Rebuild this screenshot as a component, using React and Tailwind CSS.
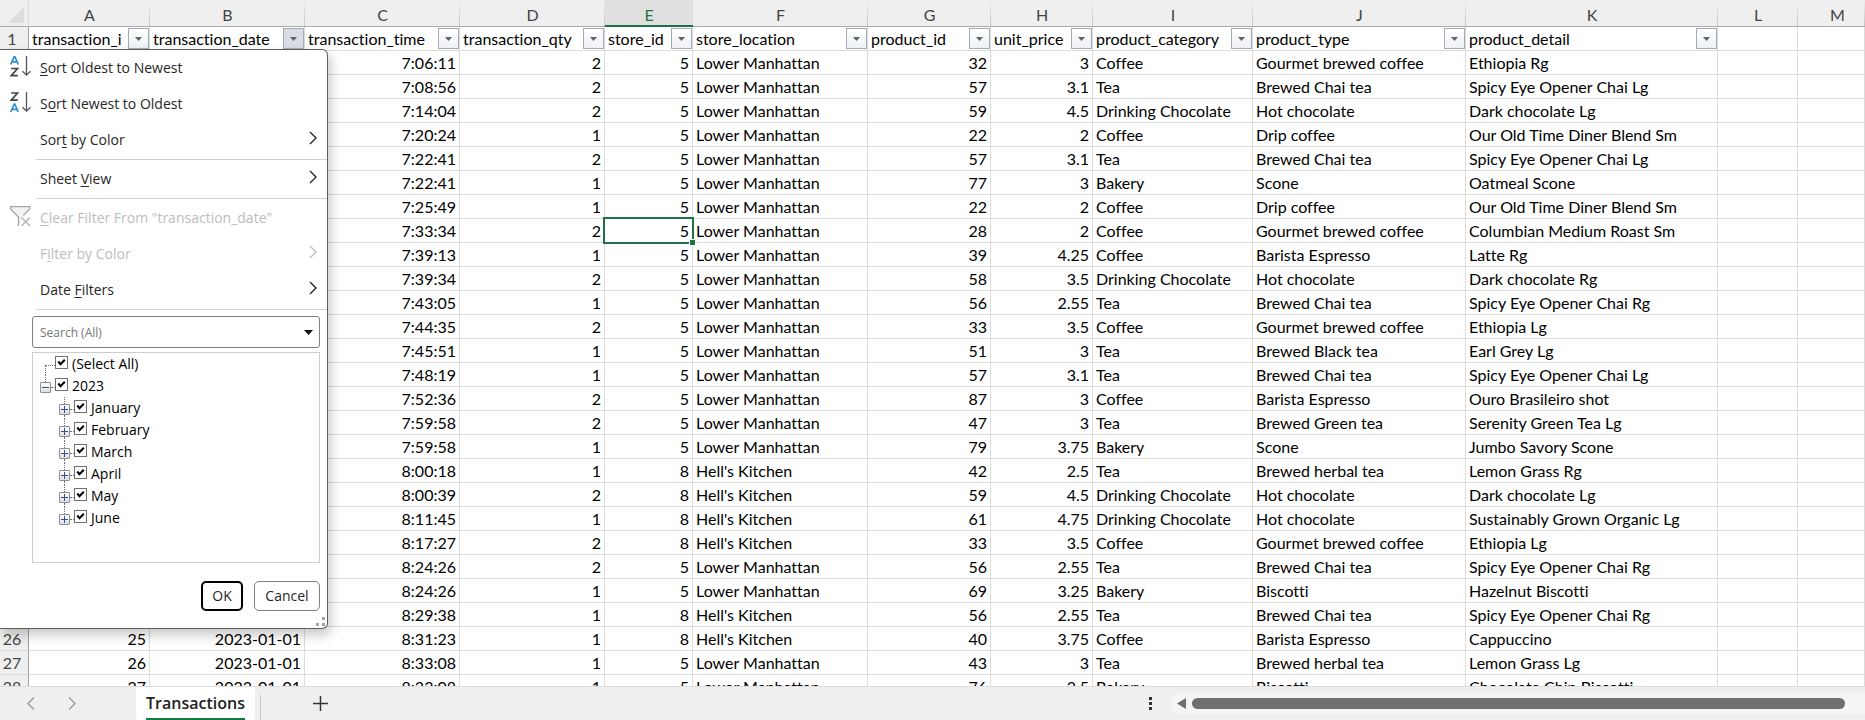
import React from "react";

const COLUMNS = [
  { letter: "A", name: "transaction_i", width: "w-[121px]", right: true },
  { letter: "B", name: "transaction_date", width: "w-[155px]", right: true, open: true },
  { letter: "C", name: "transaction_time", width: "w-[155px]", right: true },
  { letter: "D", name: "transaction_qty", width: "w-[145px]", right: true },
  { letter: "E", name: "store_id", width: "w-[88px]", right: true },
  { letter: "F", name: "store_location", width: "w-[175px]" },
  { letter: "G", name: "product_id", width: "w-[123px]", right: true },
  { letter: "H", name: "unit_price", width: "w-[102px]", right: true },
  { letter: "I", name: "product_category", width: "w-[160px]" },
  { letter: "J", name: "product_type", width: "w-[213px]" },
  { letter: "K", name: "product_detail", width: "w-[252px]" },
  { letter: "L", name: "", width: "w-[80px]" },
  { letter: "M", name: "", width: "" },
];

const LM = "Lower Manhattan";
const HK = "Hell's Kitchen";

const RECORDS = [
  ["7:06:11", "2", "5", LM, "32", "3", "Coffee", "Gourmet brewed coffee", "Ethiopia Rg"],
  ["7:08:56", "2", "5", LM, "57", "3.1", "Tea", "Brewed Chai tea", "Spicy Eye Opener Chai Lg"],
  ["7:14:04", "2", "5", LM, "59", "4.5", "Drinking Chocolate", "Hot chocolate", "Dark chocolate Lg"],
  ["7:20:24", "1", "5", LM, "22", "2", "Coffee", "Drip coffee", "Our Old Time Diner Blend Sm"],
  ["7:22:41", "2", "5", LM, "57", "3.1", "Tea", "Brewed Chai tea", "Spicy Eye Opener Chai Lg"],
  ["7:22:41", "1", "5", LM, "77", "3", "Bakery", "Scone", "Oatmeal Scone"],
  ["7:25:49", "1", "5", LM, "22", "2", "Coffee", "Drip coffee", "Our Old Time Diner Blend Sm"],
  ["7:33:34", "2", "5", LM, "28", "2", "Coffee", "Gourmet brewed coffee", "Columbian Medium Roast Sm"],
  ["7:39:13", "1", "5", LM, "39", "4.25", "Coffee", "Barista Espresso", "Latte Rg"],
  ["7:39:34", "2", "5", LM, "58", "3.5", "Drinking Chocolate", "Hot chocolate", "Dark chocolate Rg"],
  ["7:43:05", "1", "5", LM, "56", "2.55", "Tea", "Brewed Chai tea", "Spicy Eye Opener Chai Rg"],
  ["7:44:35", "2", "5", LM, "33", "3.5", "Coffee", "Gourmet brewed coffee", "Ethiopia Lg"],
  ["7:45:51", "1", "5", LM, "51", "3", "Tea", "Brewed Black tea", "Earl Grey Lg"],
  ["7:48:19", "1", "5", LM, "57", "3.1", "Tea", "Brewed Chai tea", "Spicy Eye Opener Chai Lg"],
  ["7:52:36", "2", "5", LM, "87", "3", "Coffee", "Barista Espresso", "Ouro Brasileiro shot"],
  ["7:59:58", "2", "5", LM, "47", "3", "Tea", "Brewed Green tea", "Serenity Green Tea Lg"],
  ["7:59:58", "1", "5", LM, "79", "3.75", "Bakery", "Scone", "Jumbo Savory Scone"],
  ["8:00:18", "1", "8", HK, "42", "2.5", "Tea", "Brewed herbal tea", "Lemon Grass Rg"],
  ["8:00:39", "2", "8", HK, "59", "4.5", "Drinking Chocolate", "Hot chocolate", "Dark chocolate Lg"],
  ["8:11:45", "1", "8", HK, "61", "4.75", "Drinking Chocolate", "Hot chocolate", "Sustainably Grown Organic Lg"],
  ["8:17:27", "2", "8", HK, "33", "3.5", "Coffee", "Gourmet brewed coffee", "Ethiopia Lg"],
  ["8:24:26", "2", "5", LM, "56", "2.55", "Tea", "Brewed Chai tea", "Spicy Eye Opener Chai Rg"],
  ["8:24:26", "1", "5", LM, "69", "3.25", "Bakery", "Biscotti", "Hazelnut Biscotti"],
  ["8:29:38", "1", "8", HK, "56", "2.55", "Tea", "Brewed Chai tea", "Spicy Eye Opener Chai Rg"],
  ["8:31:23", "1", "8", HK, "40", "3.75", "Coffee", "Barista Espresso", "Cappuccino"],
  ["8:33:08", "1", "5", LM, "43", "3", "Tea", "Brewed herbal tea", "Lemon Grass Lg"],
  ["8:33:08", "1", "5", LM, "76", "3.5", "Bakery", "Biscotti", "Chocolate Chip Biscotti"],
];

const MONTHS = ["January", "February", "March", "April", "May", "June"];

function FilterButton({ name, open }) {
  return (
    <button
      type="button"
      aria-label={`Filter ${name}`}
      aria-expanded={!!open}
      className={`flex h-[21px] w-[21px] shrink-0 items-center justify-center border border-[#a3abb5] ${
        open ? "bg-[#d9dce3]" : "bg-linear-to-b from-white to-[#eef1f6]"
      }`}
    >
      <svg width="7" height="4" viewBox="0 0 7 4" aria-hidden="true">
        <path d="M0 0h7L3.500 4z" fill="#5f6368" />
      </svg>
    </button>
  );
}

function Sheet() {
  return (
    <table className="w-full table-fixed border-separate border-spacing-0 font-['Lato',sans-serif] text-base leading-[23px] text-black [font-variant-ligatures:none]">
      <colgroup>
        <col className="w-[29px]" />
        {COLUMNS.map((c) => (
          <col key={c.letter} className={c.width} />
        ))}
      </colgroup>
      <thead>
        <tr className="h-[27px]">
          <td className="border-r border-b border-r-[#dadada] border-b-[#ababab] bg-[#efefef] p-0">
            <div className="flex justify-end pt-1 pr-1">
              <svg width="16" height="16" viewBox="0 0 16 16" aria-hidden="true">
                <path d="M16 0v16H0z" fill="#dcdcdc" />
              </svg>
            </div>
          </td>
          {COLUMNS.map((c) => (
            <th
              key={c.letter}
              scope="col"
              className={`pt-1 pr-0 pb-0 leading-5 font-normal ${c.letter === "M" ? "pl-3" : "pl-0"} ${
                c.letter === "E"
                  ? "border-b-2 border-b-[#1e7145] bg-[#e0e0e0] text-[#1e7145]"
                  : "border-b border-b-[#ababab] bg-[#efefef] bg-[linear-gradient(to_bottom,#efefef,#c4c4c4)] bg-[length:1px_100%] bg-right bg-no-repeat text-[#444444]"
              }`}
            >
              {c.letter}
            </th>
          ))}
        </tr>
      </thead>
      <tbody>
        <tr className="h-6">
          <th
            scope="row"
            className="border-r border-b border-r-[#a0a0a0] border-b-[#dadada] bg-[#efefef] p-0 pr-1 text-center font-normal text-[#444444]"
          >
            1
          </th>
          {COLUMNS.map((c) => (
            <td key={c.letter} className="border-r border-b border-[#dcdcdc] p-0 pl-[3px]">
              {c.name && (
                <div className="flex h-[23px] items-center">
                  <span className="min-w-0 flex-1 overflow-hidden whitespace-nowrap">{c.name}</span>
                  <FilterButton name={c.name} open={c.open} />
                </div>
              )}
            </td>
          ))}
        </tr>
        {RECORDS.map((rec, i) => {
          const cells = [String(i + 1), "2023-01-01", ...rec, "", ""];
          return (
            <tr key={i} className="h-6">
              <th
                scope="row"
                className="border-r border-b border-r-[#a0a0a0] border-b-[#dadada] bg-[#efefef] p-0 pr-1 text-center font-normal text-[#444444]"
              >
                {i + 2}
              </th>
              {cells.map((v, j) => {
                const selected = i === 7 && j === 4;
                return (
                  <td
                    key={j}
                    className={`border-r border-b border-[#dcdcdc] px-[3px] py-0 whitespace-nowrap ${
                      COLUMNS[j].right || j === 7 ? "text-right" : "text-left"
                    } ${selected ? "relative" : ""}`}
                  >
                    {v}
                    {selected && (
                      <>
                        <span className="absolute -inset-[2px] border-2 border-[#1e7145]" />
                        <span className="absolute -right-[4px] -bottom-[4px] h-[7px] w-[7px] border border-white bg-[#1e7145]" />
                      </>
                    )}
                  </td>
                );
              })}
            </tr>
          );
        })}
      </tbody>
    </table>
  );
}

function SortIcon({ top, bottom }) {
  const letters = {
    A: { d: "M0.800 8.500 4.200 0.500h0.600L8.200 8.500M2.200 5.800h4.600", color: "#2e8fd0" },
    Z: { d: "M1.200 1h6.300L1.200 8.200h6.600", color: "#444444" },
  };
  return (
    <svg width="21" height="21" viewBox="0 0 21 21" fill="none" aria-hidden="true">
      <g stroke={letters[top].color} strokeWidth="1.700">
        <path d={letters[top].d} />
      </g>
      <g stroke={letters[bottom].color} strokeWidth="1.700" transform="translate(0 11.500)">
        <path d={letters[bottom].d} />
      </g>
      <path d="M16.500 0v19M12.500 15.200l4 4 4-4" stroke="#555555" strokeWidth="1.300" />
    </svg>
  );
}

function ClearFilterIcon() {
  return (
    <svg width="21" height="21" viewBox="0 0 21 21" fill="none" aria-hidden="true">
      <path
        d="M8.500 20v-9L0.700 3V0.700h19V3l-6.400 6.500"
        fill="#f3f3f3"
        stroke="#a6a6a6"
        strokeWidth="1.300"
      />
      <path d="M11.500 11.500l8.500 8.500M20 11.500l-8.500 8.500" stroke="#b0b0b0" strokeWidth="1.200" />
    </svg>
  );
}

function MenuItem({ icon, before = "", hot, after, arrow, disabled }) {
  return (
    <button
      type="button"
      role="menuitem"
      disabled={disabled}
      className={`flex h-9 w-full items-center pr-[10px] pl-[10px] text-left ${
        disabled ? "text-[#bdbdbd]" : "text-[#262626]"
      }`}
    >
      <span className="flex w-[30px] shrink-0 pb-1">{icon}</span>
      <span className="flex-1 whitespace-nowrap">
        {before}
        <span className="underline underline-offset-2">{hot}</span>
        {after}
      </span>
      {arrow && (
        <svg width="8" height="14" viewBox="0 0 8 14" fill="none" className="mb-1" aria-hidden="true">
          <path d="M1 1l6 6-6 6" stroke="currentColor" strokeWidth="1.400" />
        </svg>
      )}
    </button>
  );
}

function Separator() {
  return (
    <div role="separator" className="flex h-[3px] items-center pl-9">
      <div className="h-px w-full bg-[#d0d0d0]" />
    </div>
  );
}

function Check({ label }) {
  return (
    <label className="flex items-center gap-1 whitespace-nowrap">
      <span className="relative mb-1 flex h-[13px] w-[13px] shrink-0">
        <input
          type="checkbox"
          defaultChecked
          className="peer h-[13px] w-[13px] appearance-none border border-[#707070] bg-white"
        />
        <svg
          width="13"
          height="13"
          viewBox="0 0 13 13"
          fill="none"
          className="pointer-events-none absolute inset-0 hidden peer-checked:block"
          aria-hidden="true"
        >
          <path d="M3.300 5.500l2.200 2.700L9.800 3.700" stroke="#000" strokeWidth="2" />
        </svg>
      </span>
      {label}
    </label>
  );
}

function Expander({ open, label, last }) {
  return (
    <span className="flex h-[22px] items-center">
      <span className="flex h-[22px] w-[11px] flex-col items-center">
        <span className="h-[7px] w-px border-l border-dotted border-[#707070]" />
        <button
          type="button"
          aria-label={label}
          className="flex h-[11px] w-[11px] shrink-0 items-center justify-center rounded-[1px] border border-[#8f8f8f] bg-linear-to-b from-white to-[#dedede]"
        >
          <svg width="7" height="7" viewBox="0 0 7 7" aria-hidden="true">
            <path d={open ? "M0 3.500h7" : "M0 3.500h7M3.500 0v7"} stroke="#2f4f9a" />
          </svg>
        </button>
        {!last && <span className="h-1 w-px border-l border-dotted border-[#707070]" />}
      </span>
      <span className="mt-[2px] w-1 border-t border-dotted border-[#707070]" />
    </span>
  );
}

function FilterMenu() {
  return (
    <div
      role="menu"
      className="absolute top-[49px] left-0 w-[328px] rounded-r-md border border-l-0 border-[#5c5c5c] bg-white font-['Open_Sans',sans-serif] text-sm text-[#262626] shadow-[3px_6px_12px_rgba(0,0,0,0.22)]"
    >
      <MenuItem icon={<SortIcon top="A" bottom="Z" />} hot="S" after="ort Oldest to Newest" />
      <MenuItem icon={<SortIcon top="Z" bottom="A" />} before="S" hot="o" after="rt Newest to Oldest" />
      <MenuItem before="Sor" hot="t" after=" by Color" arrow />
      <Separator />
      <MenuItem before="Sheet " hot="V" after="iew" arrow />
      <Separator />
      <MenuItem icon={<ClearFilterIcon />} hot="C" after={'lear Filter From "transaction_date"'} disabled />
      <MenuItem before="F" hot="i" after="lter by Color" arrow disabled />
      <MenuItem before="Date " hot="F" after="ilters" arrow />
      <Separator />

      <div className="pt-[5px] pr-[7px] pl-8">
        <div className="flex h-8 items-center rounded-[3px] border border-[#808080]">
          <input
            type="text"
            aria-label="Search values"
            placeholder="Search (All)"
            className="h-full min-w-0 flex-1 bg-transparent pl-[7px] text-xs outline-none placeholder:text-[#767676]"
          />
          <button type="button" aria-label="Search scope" className="flex h-full w-[22px] items-center justify-center">
            <svg width="9" height="5" viewBox="0 0 9 5" aria-hidden="true">
              <path d="M0 0h9L4.500 5z" fill="#111" />
            </svg>
          </button>
        </div>

        <div className="mt-1 h-[211px] border border-[#cccccc] leading-[22px] text-black">
          <div className="flex h-[22px] items-center pl-3">
            <span className="h-[10px] w-[10px] self-end border-t border-l border-dotted border-[#707070]" />
            <Check label="(Select All)" />
          </div>
          <div className="flex h-[22px] items-center pl-[7px]">
            <Expander open last label="Collapse 2023" />
            <Check label="2023" />
          </div>
          {MONTHS.map((m) => (
            <div key={m} className="flex h-[22px] items-center pl-[26px]">
              <Expander label={`Expand ${m}`} last={m === "June"} />
              <Check label={m} />
            </div>
          ))}
        </div>

        <div className="flex justify-end gap-[11px] pt-[18px]">
          <button type="button" className="h-[30px] w-[42px] rounded-[5px] border-2 border-black">
            OK
          </button>
          <button type="button" className="h-[30px] w-[66px] rounded-[5px] border border-[#808080]">
            Cancel
          </button>
        </div>
      </div>
      <div className="flex h-[17px] items-end justify-end pr-[2px] pb-[2px]">
        <svg width="9" height="9" viewBox="0 0 9 9" fill="#a3a3a3" aria-hidden="true">
          <path d="M6 0h3v3H6zM0 6h3v3H0zM6 6h3v3H6z" />
        </svg>
      </div>
    </div>
  );
}

function TabBar() {
  return (
    <footer className="flex h-[34px] shrink-0 border-t border-[#dcdcdc] bg-[#efefef]">
      <nav aria-label="Sheets" className="flex">
        <div className="flex w-[136px] items-center gap-[33px] pl-[27px] text-[#9a9a9a]">
          <button type="button" aria-label="Previous sheet">
            <svg width="8" height="13" viewBox="0 0 8 13" fill="none" aria-hidden="true">
              <path d="M7 0.500L1 6.500l6 6" stroke="currentColor" strokeWidth="1.400" />
            </svg>
          </button>
          <button type="button" aria-label="Next sheet">
            <svg width="8" height="13" viewBox="0 0 8 13" fill="none" aria-hidden="true">
              <path d="M1 0.500l6 6-6 6" stroke="currentColor" strokeWidth="1.400" />
            </svg>
          </button>
        </div>
        <button
          type="button"
          className="flex w-[119px] justify-center rounded-b-[3px] bg-white pt-1 font-['Open_Sans',sans-serif] text-base leading-6 font-semibold text-[#222222]"
        >
          <span className="border-b-2 border-[#107c41]">Transactions</span>
        </button>
        <div className="mt-2 ml-[5px] w-px bg-[#c6c6c6]" />
        <button type="button" aria-label="New sheet" className="ml-[52px] flex items-center">
          <svg width="15" height="15" viewBox="0 0 15 15" aria-hidden="true">
            <path d="M0 7.500h15M7.500 0v15" stroke="#333" strokeWidth="1.500" />
          </svg>
        </button>
      </nav>
      <div className="ml-auto flex w-[716px] items-center">
        <button type="button" aria-label="Resize scroll bar" className="flex w-[23px]">
          <svg width="3" height="13" viewBox="0 0 3 13" fill="#333" aria-hidden="true">
            <path d="M0 0h3v3H0zM0 5h3v3H0zM0 10h3v3H0z" />
          </svg>
        </button>
        <div className="flex h-[21px] flex-1 items-center rounded-l-md bg-[#f5f5f5] pr-5 pl-[5px]">
          <button type="button" aria-label="Scroll left" className="mr-[6px]">
            <svg width="9" height="11" viewBox="0 0 9 11" aria-hidden="true">
              <path d="M9 0v11L0 5.500z" fill="#6e6e6e" />
            </svg>
          </button>
          <div className="h-[11px] flex-1 rounded-full bg-[#6f6f6f]" />
        </div>
      </div>
    </footer>
  );
}

export default function App() {
  return (
    <div className="flex h-screen flex-col overflow-hidden bg-white">
      <main className="relative min-h-0 flex-1 overflow-hidden">
        <Sheet />
        <FilterMenu />
      </main>
      <TabBar />
    </div>
  );
}
